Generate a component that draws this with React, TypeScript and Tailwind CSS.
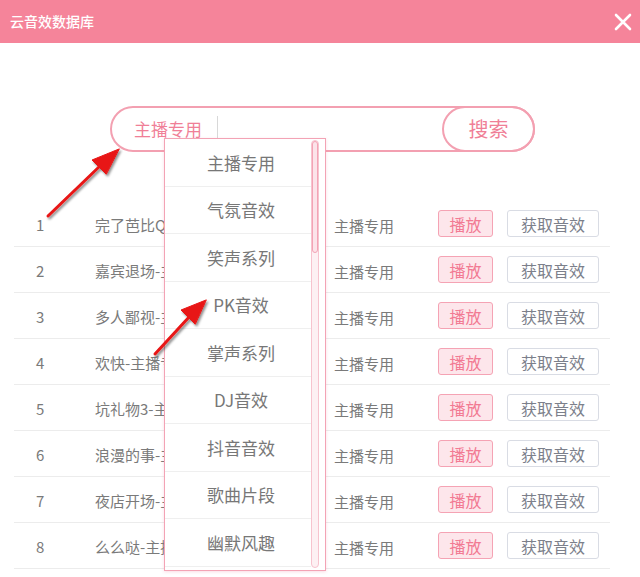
// Cloud sound-effect library dialog
const rows = [
  { no: 1, name: "完了芭比Q-主播专用" },
  { no: 2, name: "嘉宾退场-主播专用" },
  { no: 3, name: "多人鄙视-主播专用" },
  { no: 4, name: "欢快-主播专用" },
  { no: 5, name: "坑礼物3-主播专用" },
  { no: 6, name: "浪漫的事-主播专用" },
  { no: 7, name: "夜店开场-主播专用" },
  { no: 8, name: "么么哒-主播专用" },
];

const categories = ["主播专用", "气氛音效", "笑声系列", "PK音效", "掌声系列", "DJ音效", "抖音音效", "歌曲片段", "幽默风趣"];

const font = { fontFamily: '"Noto Sans CJK SC", "Noto Sans", sans-serif' };

export default function App() {
  return (
    <div className="relative h-[577px] w-[640px] overflow-hidden bg-white" style={font}>
      {/* Title bar */}
      <header className="flex h-[43px] items-center justify-between bg-[#f5849a] pl-[10px] pr-[7px]">
        <span className="text-[14px] font-medium text-white">云音效数据库</span>
        <svg className="h-[20px] w-[20px]" viewBox="0 0 20 20" fill="none" stroke="white" strokeWidth={2.6} strokeLinecap="round">
          <path d="M3 3l14 14M17 3L3 17" />
        </svg>
      </header>

      {/* Search */}
      <div className="ml-[110px] mt-[63px] flex h-[46px] w-[425px] items-center rounded-full border-2 border-[#f3a0b1]">
        <span className="ml-[22px] text-[17px] text-[#f07f97]">主播专用</span>
        <div className="ml-[15px] h-[26px] w-px bg-[#d8d8d8]" />
        <div className="flex-1" />
        <button className="-mr-[2px] flex h-[46px] w-[93px] items-center justify-center rounded-full border-2 border-[#f3a0b1] text-[20px] text-[#f07f97]">
          搜索
        </button>
      </div>

      {/* Table */}
      <div className="ml-[14px] mt-[49px] w-[596px]">
        {rows.map((r) => (
          <div key={r.no} className="flex h-[46px] items-center border-b border-[#ececec] text-[15px] text-[#7a7a7a]">
            <span className="w-[81px] pl-[22px] pt-[3px]">{r.no}</span>
            {/* name is cut where the open dropdown covers it */}
            <span className="w-[69px] overflow-hidden whitespace-nowrap pt-[3px]">{r.name}</span>
            <span className="w-[170px]" />
            <span className="w-[104px] pt-[6px]">主播专用</span>
            <button className="flex h-[27px] w-[55px] items-center justify-center rounded-[3px] border border-[#f5a3b4] bg-[#fde6eb] text-[16px] text-[#f27a93]">
              播放
            </button>
            <button className="ml-[14px] flex h-[27px] w-[92px] items-center justify-center rounded-[3px] border border-[#d9dce4] bg-white text-[16px] text-[#7c808b]">
              获取音效
            </button>
          </div>
        ))}
      </div>

      {/* Category dropdown */}
      <div className="absolute left-[164px] top-[138px] flex h-[433px] w-[162px] border border-[#f3a3b5] bg-white shadow-[0_1px_3px_rgba(240,120,150,0.25)]">
        <ul className="flex-1">
          {categories.map((c) => (
            <li key={c} className="flex h-[47.5px] items-center justify-center border-b border-[#efefef] text-[17px] text-[#777]">
              <span className="pl-[6px]">{c}</span>
            </li>
          ))}
        </ul>
        <div className="mr-[6px] mt-[1px] mb-[2px] w-[8px] rounded-full border border-[#f7c3ce] bg-[#fdf0f3]">
          <div className="h-[112px] rounded-full border border-[#f3a3b5] bg-[#fce3e9]" />
        </div>
      </div>

      {/* Annotation arrows */}
      <svg className="pointer-events-none absolute inset-0" width="640" height="577" viewBox="0 0 640 577">
        <defs>
          <filter id="sh" x="-20%" y="-20%" width="140%" height="140%">
            <feDropShadow dx="1.5" dy="2" stdDeviation="1.2" floodColor="#000" floodOpacity="0.45" />
          </filter>
        </defs>
        <g filter="url(#sh)" fill="#e81414" stroke="#e81414" strokeLinecap="round">
          <path d="M48 216L100 166" strokeWidth={3} fill="none" />
          <path d="M119 149L92 160L106 174Z" strokeWidth={1} />
          <path d="M155 354L190 316" strokeWidth={3} fill="none" />
          <path d="M206 300L181 310L195 324Z" strokeWidth={1} />
        </g>
      </svg>
    </div>
  );
}
